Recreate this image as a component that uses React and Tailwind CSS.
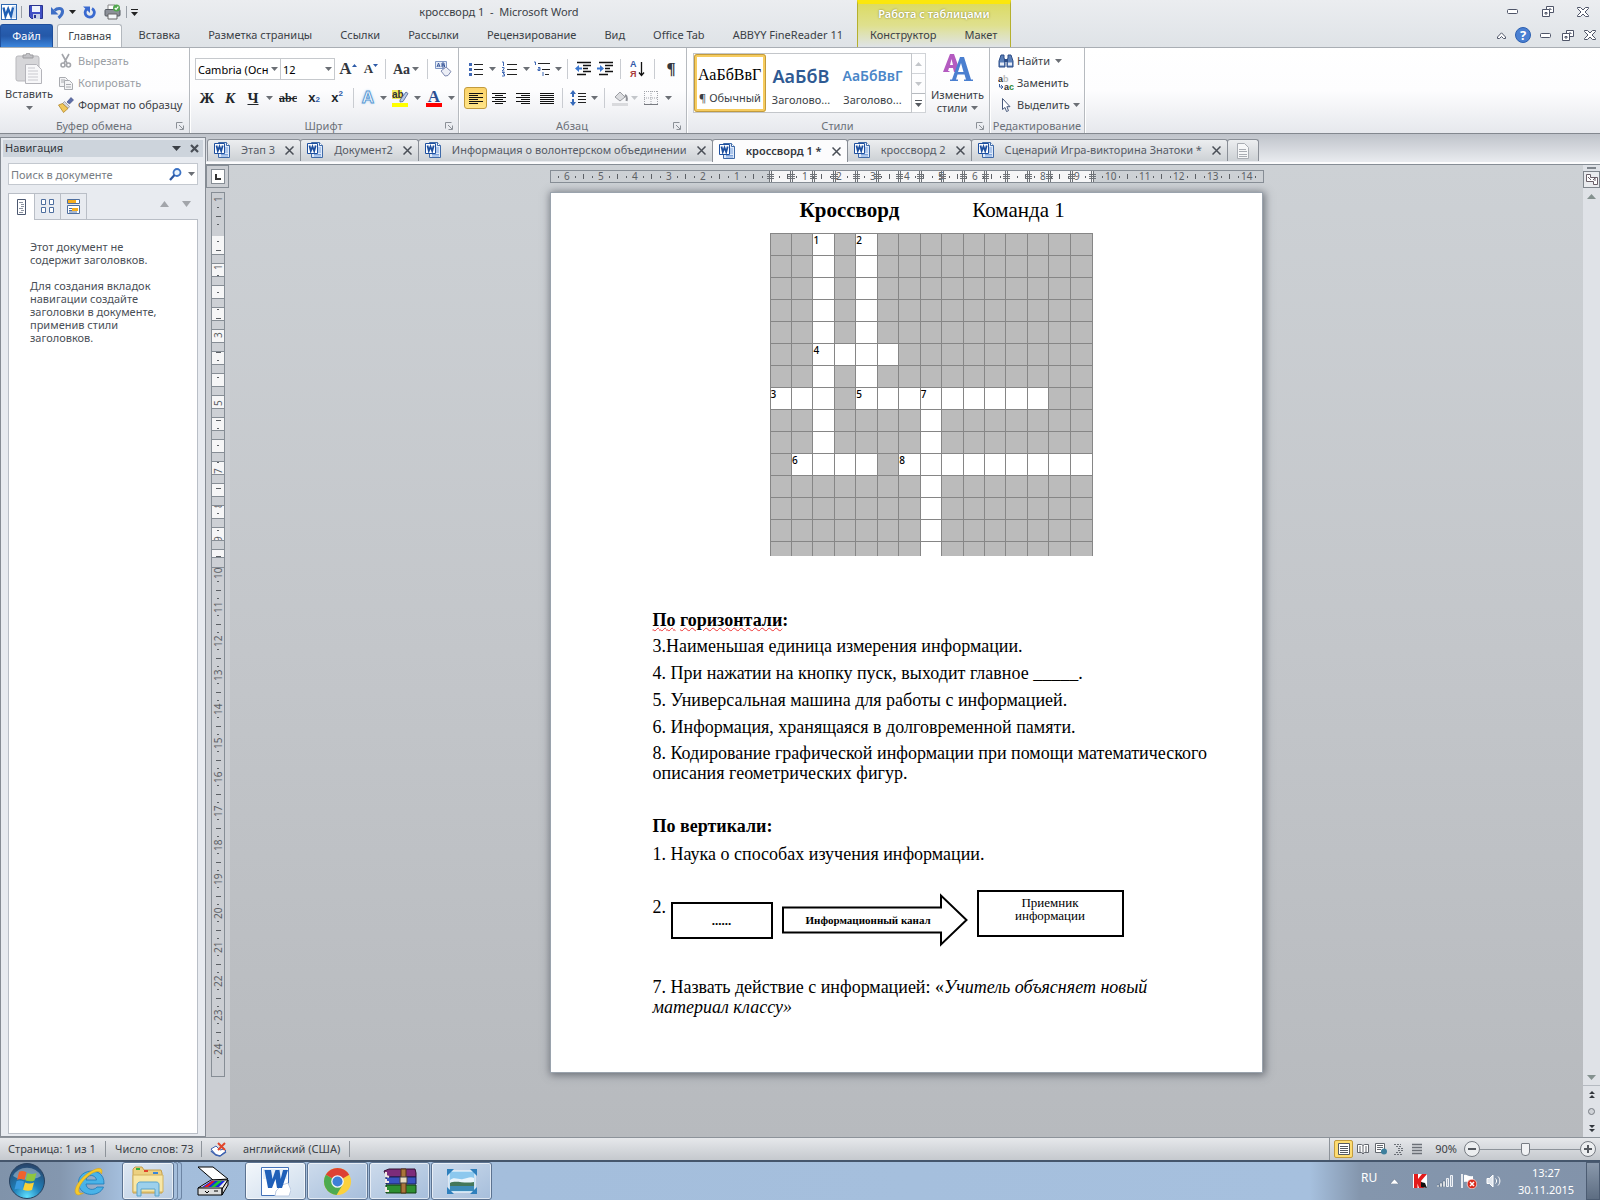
const RIBBON_TABS = [
  "Вставка",
  "Разметка страницы",
  "Ссылки",
  "Рассылки",
  "Рецензирование",
  "Вид",
  "Office Tab",
  "ABBYY FineReader 11"
];

const DOC_TABS = [
  { title: "Этап 3" },
  { title: "Документ2" },
  { title: "Информация о волонтерском объединении" },
  { title: "кроссворд 1 *", active: true },
  { title: "кроссворд 2" },
  { title: "Сценарий Игра-викторина Знатоки *" }
];

// "." is an open cell, "#" a filled one, a digit opens a word
const CROSSWORD = [
  "##1#2##########",
  "##.#.##########",
  "##.#.##########",
  "##.#.##########",
  "##.#.##########",
  "##4...#########",
  "##.#.##########",
  "3..#5..7.....##",
  "##.####.#######",
  "##.####.#######",
  "#6...#8........",
  "#######.#######",
  "#######.#######",
  "#######.#######",
  "#######.#######"
];

const H_RULER = ["6", "5", "4", "3", "2", "1", "", "1", "2", "3", "4", "5", "6", "", "8", "9", "10", "11", "12", "13", "14"];
const V_RULER = ["1", "", "1", "2", "3", "4", "5", "6", "7", "8", "9", "10", "11", "12", "13", "14", "15", "16", "17", "18", "19", "20", "21", "22", "23", "24"];

function Arrow({ className = "text-[#6b6f75]" }) {
  return (
    <svg className={`h-[4px] w-[7px] shrink-0 ${className}`} viewBox="0 0 7 4" aria-hidden>
      <path d="M0 0h7L3.500 4z" fill="currentColor" />
    </svg>
  );
}

function Tool({ label, height = "h-[22px]", className = "", children }) {
  return (
    <button type="button" aria-label={label} title={label} className={`flex shrink-0 items-center justify-center ${height} ${className}`}>
      {children}
    </button>
  );
}

function Drop({ label, className = "text-[#6b6f75]" }) {
  return (
    <button type="button" aria-label={label} className="flex h-[20px] w-2 shrink-0 items-center justify-center">
      <Arrow className={className} />
    </button>
  );
}

function Sep({ className = "w-2" }) {
  return (
    <div className={`flex h-5 shrink-0 justify-center ${className}`}>
      <div className="h-full w-px bg-[#c9ccd1]" />
    </div>
  );
}

function Group({ title, launcher, className, children }) {
  return (
    <section className={`flex shrink-0 flex-col border-r border-[#b6babf] shadow-[1px_0_0_#fff] ${className}`}>
      <div className="flex-1">{children}</div>
      <div className="flex h-[15px] items-center leading-[15px] text-[#6a7078]">
        <h2 className="flex-1 text-center">{title}</h2>
        {launcher && (
          <button type="button" aria-label={`${title}: параметры`} className="mr-[5px] -ml-3 h-2 w-2">
            <svg viewBox="0 0 8 8" className="h-2 w-2" fill="none" stroke="#8b9097">
              <path d="M.5 6.500v-6h6M3 3l4 4M7.500 3.500v4h-4" />
            </svg>
          </button>
        )}
      </div>
    </section>
  );
}

function Lines({ d, color = "#111" }) {
  return (
    <svg className="h-4 w-4" viewBox="0 0 16 16" fill="none" stroke={color} aria-hidden>
      <path d={d} />
    </svg>
  );
}

function WordDocIcon() {
  return (
    <svg className="h-[17px] w-[17px] shrink-0" viewBox="0 0 17 17" aria-hidden>
      <path d="M4.500.5h8l3 3v12h-11z" fill="#dfeafa" stroke="#3f6aa8" />
      <path d="M12.500.5v3h3" fill="#fff" stroke="#3f6aa8" />
      <path d="M11 6h3M11 8h3M7 12.500h7M7 14h7M11 10h3" stroke="#7ba2dc" />
      <path d="M.5 1.500h10v10H.5z" fill="#fff" stroke="#1d4f9f" />
      <path d="M2.500 3.500l1.300 5.500L5.500 4.500 7.200 9l1.500-5.500" fill="none" stroke="#1d4f9f" strokeWidth="1.800" />
    </svg>
  );
}

function WindowButtons({ className }) {
  return (
    <div className={`flex items-center ${className}`}>
      <button type="button" aria-label="Свернуть" className="flex w-[13px] justify-center">
        <svg className="h-[5px] w-[11px]" viewBox="0 0 11 5">
          <rect x=".5" y=".5" width="10" height="4" rx="1" fill="#fff" stroke="#4f5568" />
        </svg>
      </button>
      <button type="button" aria-label="Восстановить" className="flex w-[13px] justify-center">
        <svg className="h-[11px] w-[12px]" viewBox="0 0 12 11" fill="#fff" stroke="#4f5568">
          <path d="M4.500.5h7v6h-7zM7 3h2v1" />
          <path d="M.5 3.500h7v7h-7z" />
          <path d="M3 6.500h2v1.500H3z" />
        </svg>
      </button>
      <button type="button" aria-label="Закрыть" className="flex w-[13px] justify-center">
        <svg className="h-[10px] w-[12px]" viewBox="0 0 12 10">
          <path d="M.5.5h3L6 3 8.500.5h3v1L8 5l3.500 3.500v1h-3L6 7 3.500 9.500h-3v-1L4 5 .5 1.500z" fill="#fff" stroke="#4f5568" />
        </svg>
      </button>
    </div>
  );
}

function QuickAccess() {
  return (
    <div className="flex h-6 w-[141px] shrink-0 items-center">
      <svg className="ml-px h-4 w-4 shrink-0" viewBox="0 0 16 16" aria-hidden>
        <rect x=".5" y=".5" width="15" height="15" fill="#fff" stroke="#2d67b2" />
        <path d="M11 2h4v12h-4z" fill="#cfe0f5" />
        <path d="M2.500 3.500l2 8.500L7.200 5 10 12l2-8.500" fill="none" stroke="#1f5fb4" strokeWidth="2.300" />
      </svg>
      <div className="mx-1 h-3 w-px shrink-0 bg-[#9aa0a8]" />
      <Tool label="Сохранить" className="ml-[2px] w-[15px]">
        <svg className="h-[14px] w-[14px]" viewBox="0 0 14 14">
          <path d="M.5.5h13v13h-11l-2-2z" fill="#3f4fc4" stroke="#2a348f" />
          <path d="M3 1h8v6H3z" fill="#eef3fb" />
          <path d="M4 9h7v5H4z" fill="#c9d2e6" />
          <path d="M5 10h2v3H5z" fill="#2a348f" />
        </svg>
      </Tool>
      <Tool label="Отменить" className="ml-[7px] w-[15px]">
        <svg className="h-[13px] w-[14px]" viewBox="0 0 14 13">
          <path d="M3.500 4.500C6 2 11 1.500 11.500 5c.3 2.500-1.500 5-4 7" fill="none" stroke="#3f6fc6" strokeWidth="3" />
          <path d="M0 1v7.500h7.500z" fill="#3f6fc6" />
        </svg>
      </Tool>
      <Tool label="Список отмены" className="w-[14px]">
        <Arrow className="text-[#222]" />
      </Tool>
      <Tool label="Повторить" className="ml-px w-[18px]">
        <svg className="h-[13px] w-[13px]" viewBox="0 0 13 13">
          <path d="M9 2.500a4.600 4.600 0 1 1-5 .3" fill="none" stroke="#3a6ad0" strokeWidth="2.800" />
          <path d="M0 .5h7v6.500z" fill="#3a6ad0" />
        </svg>
      </Tool>
      <Tool label="Быстрая печать" className="ml-[3px] w-[22px]">
        <svg className="h-4 w-[17px]" viewBox="0 0 17 16">
          <path d="M4 1h7v6H4z" fill="#fff" stroke="#888" />
          <rect x="1" y="5.500" width="15" height="6.500" rx="1" fill="#8c9098" stroke="#555a61" />
          <path d="M4 10h9v5H4z" fill="#f4f6f8" stroke="#666" />
          <circle cx="12.500" cy="4" r="3.500" fill="#52a74e" />
          <path d="M10.800 4l1.300 1.400 2.200-2.700" fill="none" stroke="#fff" strokeWidth="1.200" />
        </svg>
      </Tool>
      <div className="mx-[3px] h-3 w-px shrink-0 bg-[#9aa0a8]" />
      <Tool label="Настройка панели быстрого доступа" className="w-2">
        <svg className="h-[7px] w-[7px]" viewBox="0 0 7 7">
          <path d="M0 .5h7" stroke="#222" />
          <path d="M0 3h7L3.500 7z" fill="#222" />
        </svg>
      </Tool>
    </div>
  );
}

function Header() {
  return (
    <header className="flex h-12 shrink-0 border-b border-[#a9aeb4] bg-linear-to-b from-[#ebedf0] to-[#dfe3e7] text-[#3b3f46]">
      <div className="flex w-[857px] shrink-0 flex-col">
        <div className="flex h-6">
          <QuickAccess />
          <h1 className="flex-1 self-center text-center whitespace-pre">кроссворд 1  -  Microsoft Word</h1>
        </div>
        <nav className="flex h-[24px] items-stretch">
          <button type="button" className="w-[56px] rounded-t-[3px] border border-b-0 border-[#1f4f9c] bg-linear-to-b from-[#2b62b4] via-[#2458a8] to-[#3c86dd] text-white">
            Файл
          </button>
          <button type="button" className="ml-1 w-[69px] rounded-t-[3px] border border-b-0 border-[#b3b8be] bg-white">
            Главная
          </button>
          <div className="flex pl-[2px]">
            {RIBBON_TABS.map((tab) => (
              <button key={tab} type="button" className="px-[14px] whitespace-nowrap">
                {tab}
              </button>
            ))}
          </div>
        </nav>
      </div>
      <div className="flex w-[154px] shrink-0 flex-col border-x border-[#b5b02e] border-t-[4px] border-t-[#fbe70c] bg-linear-to-b from-[#dcdb62] via-[#dfe08e] via-50% to-[#dfe3e7]">
        <div className="h-5 text-center leading-[19px] font-semibold text-white [text-shadow:0_0_2px_#77762f]">Работа с таблицами</div>
        <div className="flex h-6">
          <button type="button" className="px-3">Конструктор</button>
          <button type="button" className="px-4">Макет</button>
        </div>
      </div>
      <div className="flex flex-1 flex-col items-end">
        <WindowButtons className="h-6 gap-[22px] pr-[11px]" />
        <div className="flex h-6 items-center">
          <button type="button" aria-label="Свернуть ленту" className="mr-[9px]">
            <svg className="h-[7px] w-[9px]" viewBox="0 0 9 7">
              <path d="M.5 5L4.500.8 8.500 5v1.500h-2l-2-2-2 2h-2z" fill="#fff" stroke="#4f5568" />
            </svg>
          </button>
          <button type="button" aria-label="Справка" className="mr-[8px] h-4 w-4 rounded-full border border-[#2c5fb0] bg-[#4a80d2] text-[13px] leading-[13px] font-bold text-white">
            ?
          </button>
          <WindowButtons className="gap-[9px] pr-[4px]" />
        </div>
      </div>
    </header>
  );
}

function ClipboardGroup() {
  return (
    <Group title="Буфер обмена" launcher className="w-[190px]">
      <div className="flex pt-[2px]">
        <button type="button" className="flex w-[58px] flex-col items-center text-[#3b3f46]">
          <svg className="mt-[3px] h-[31px] w-[28px]" viewBox="0 0 28 31">
            <rect x="1" y="3" width="23" height="25" rx="2" fill="#d6d6d9" stroke="#b9b9bd" />
            <path d="M8 5V2h3a2 2 0 0 1 4 0h3v3z" fill="#c2c2c6" stroke="#9c9ca0" />
            <path d="M10.500 11.500h11l5 5v14h-16z" fill="#f7f7f9" stroke="#b4b4ba" />
            <path d="M13 15h7M13 18h10M13 21h10M13 24h10M13 27h10" stroke="#c9c9cf" />
          </svg>
          <span className="leading-[20px]">Вставить</span>
          <span className="mt-[2px]"><Arrow /></span>
        </button>
        <div className="flex flex-col text-[#9b9fa5]">
          <button type="button" className="flex h-[22px] items-center gap-1">
            <svg className="h-4 w-4" viewBox="0 0 16 16" fill="none" stroke="#a3a5aa" strokeWidth="1.600">
              <path d="M4 1l5 9M11 1L6 10" />
              <circle cx="5" cy="12" r="2" />
              <circle cx="10.500" cy="12" r="2" />
            </svg>
            Вырезать
          </button>
          <button type="button" className="flex h-[22px] items-center gap-1">
            <svg className="h-4 w-4" viewBox="0 0 16 16" fill="#f3f3f5" stroke="#a9abb0">
              <path d="M1.500 2.500h6l2 2v7h-8zM3 5h4M3 7h4" />
              <path d="M6.500 5.500h5l3 3v6h-8zM8 9.500h5M8 12h5" />
            </svg>
            Копировать
          </button>
          <button type="button" className="flex h-[22px] items-center gap-1 text-[#3b3f46]">
            <svg className="h-4 w-4" viewBox="0 0 16 16">
              <path d="M9 5l4-4.500L15.500 3 11.500 7z" fill="#5d6ea8" stroke="#39457a" strokeWidth=".6" />
              <path d="M6.500 4.500l5 5-1.500 2-5.500-5z" fill="#d9d9de" stroke="#77777f" strokeWidth=".6" />
              <path d="M4.500 6.500l5.500 5-4.500 4L.5 8z" fill="#f1c75b" stroke="#a87c1e" strokeWidth=".7" />
            </svg>
            Формат по образцу
          </button>
        </div>
      </div>
    </Group>
  );
}

function FontGroup() {
  return (
    <Group title="Шрифт" launcher className="w-[269px]">
      <div className="flex h-[42px] items-center pl-[5px] font-['Liberation_Serif',serif] text-[#33373d]">
        <div className="flex h-[22px] w-[86px] items-center border border-[#c6c9cd] bg-white font-['Noto_Sans',sans-serif] text-black">
          <input aria-label="Шрифт" defaultValue="Cambria (Осн" className="h-full w-[74px] pl-[2px] text-[11px] outline-none" />
          <Drop label="Выбрать шрифт" />
        </div>
        <div className="flex h-[22px] w-[54px] items-center border border-l-0 border-[#c6c9cd] bg-white font-['Noto_Sans',sans-serif] text-black">
          <input aria-label="Размер шрифта" defaultValue="12" className="h-full w-[43px] pl-[2px] text-[11px] outline-none" />
          <Drop label="Выбрать размер" />
        </div>
        <Tool label="Увеличить размер" className="w-[26px] text-[17px] font-bold">
          A
          <svg className="mb-2 h-[3px] w-[5px]" viewBox="0 0 5 3"><path d="M0 3h5L2.500 0z" fill="#2c5aa8" /></svg>
        </Tool>
        <Tool label="Уменьшить размер" className="w-5 text-[13px] font-bold">
          A
          <svg className="mb-2 h-[3px] w-[5px]" viewBox="0 0 5 3"><path d="M0 0h5L2.500 3z" fill="#2c5aa8" /></svg>
        </Tool>
        <Sep />
        <Tool label="Регистр" className="w-[34px] gap-[2px] text-[14px] font-bold">
          Aa
          <Arrow />
        </Tool>
        <Sep />
        <Tool label="Очистить формат" className="w-[24px]">
          <svg className="h-4 w-[17px]" viewBox="0 0 17 16">
            <path d="M.5.5h11v7H.5z" fill="#e6edf8" stroke="#8097c4" />
            <path d="M2 6l1.500-4L5 6M2.500 5h2M7 6V2h2v2H7h2.500v2z" fill="none" stroke="#3d5a9b" />
            <path d="M6 10l5-4 5 4.500-3 4-3 .5z" fill="#eceef6" stroke="#7f8ab0" />
          </svg>
        </Tool>
      </div>
      <div className="flex h-4 items-center pl-[5px] font-['Liberation_Serif',serif] text-[#22262b]">
        <Tool label="Полужирный" className="w-6 text-[15px] font-bold">Ж</Tool>
        <Tool label="Курсив" className="w-[22px] text-[15px] font-bold italic">К</Tool>
        <Tool label="Подчеркнутый" className="w-6 text-[15px] font-bold underline">Ч</Tool>
        <Drop label="Стиль подчеркивания" />
        <Tool label="Зачеркнутый" className="w-[30px] text-[12px] font-bold line-through">abc</Tool>
        <Tool label="Подстрочный знак" className="w-[22px] font-['Liberation_Sans',sans-serif] text-[13px] font-bold">
          x<sub className="text-[8px] text-[#2c5aa8]">2</sub>
        </Tool>
        <Tool label="Надстрочный знак" className="w-6 font-['Liberation_Sans',sans-serif] text-[13px] font-bold">
          x<sup className="text-[8px] text-[#2c5aa8]">2</sup>
        </Tool>
        <Sep />
        <Tool label="Текстовые эффекты" className="w-[22px] font-['Liberation_Sans',sans-serif] text-[17px] font-bold text-white [-webkit-text-stroke:1px_#5b9bd5] [text-shadow:0_0_3px_#7db6ea]">A</Tool>
        <Drop label="Выбрать эффект" />
        <Tool label="Цвет выделения" className="w-[26px]">
          <svg className="h-[17px] w-[17px]" viewBox="0 0 17 17">
            <path d="M0 0h10v9H0z" fill="#f2ec5b" />
            <text x="0" y="8" fontSize="10" fontWeight="700" fill="#333" fontFamily="Liberation Sans, sans-serif">ab</text>
            <path d="M8 10l6-8 2 1.500-5 8-3 .5z" fill="#b7c9e8" stroke="#4a5f91" strokeWidth=".8" />
            <path d="M0 13h16v4H0z" fill="#ff0" />
          </svg>
        </Tool>
        <Drop label="Выбрать цвет выделения" />
        <Tool label="Цвет текста" className="w-[26px] flex-col">
          <span className="h-[13px] text-[17px] leading-[13px] font-bold text-[#2b4f92]">A</span>
          <span className="h-1 w-4 bg-[#f00]" />
        </Tool>
        <Drop label="Выбрать цвет текста" />
      </div>
    </Group>
  );
}

function ParagraphGroup() {
  return (
    <Group title="Абзац" launcher className="w-[228px]">
      <div className="flex h-[42px] items-center pl-[5px]">
        <Tool label="Маркеры" className="w-6">
          <svg className="h-4 w-4" viewBox="0 0 16 16">
            <path d="M6 3.500h9M6 8.500h9M6 13.500h9" stroke="#222" />
            <path d="M1 2h3v3H1zM1 7h3v3H1zM1 12h3v3H1z" fill="#3f68b5" />
          </svg>
        </Tool>
        <Drop label="Вид маркера" />
        <Tool label="Нумерация" className="w-[26px]">
          <svg className="h-4 w-4" viewBox="0 0 16 16">
            <path d="M6 3.500h10M6 8.500h10M6 13.500h10" stroke="#222" />
            <path d="M1 1h1.500v4M1 6.500h2v1.500l-2 2h2.500M1 11.500h2.500L2 13h1.500v2H1" fill="none" stroke="#3f68b5" />
          </svg>
        </Tool>
        <Drop label="Вид номера" />
        <Tool label="Многоуровневый список" className="w-6">
          <svg className="h-4 w-4" viewBox="0 0 16 16">
            <path d="M4 2.500h12M8 8.500h8M11 13.500h4" stroke="#222" />
            <path d="M0 1h1.500v3M4 6.500h2v3H4v-1.500h2M9 11v4" fill="none" stroke="#3f68b5" />
          </svg>
        </Tool>
        <Drop label="Вид списка" />
        <Sep className="w-[10px]" />
        <Tool label="Уменьшить отступ" className="w-[22px]">
          <svg className="h-4 w-4" viewBox="0 0 16 16">
            <path d="M2 1.500h14M8 4.500h8M8 7.500h5M8 10.500h8M2 13.500h9" stroke="#111" strokeWidth="1.500" />
            <path d="M0 7.500l4-3.500v2.500h3v2H4V11z" fill="#3c78d0" />
          </svg>
        </Tool>
        <Tool label="Увеличить отступ" className="w-[22px]">
          <svg className="h-4 w-4" viewBox="0 0 16 16">
            <path d="M2 1.500h14M8 4.500h8M8 7.500h5M8 10.500h8M2 13.500h9" stroke="#111" strokeWidth="1.500" />
            <path d="M7 7.500L3 4v2.500H0v2h3V11z" fill="#3c78d0" />
          </svg>
        </Tool>
        <Sep />
        <Tool label="Сортировка" className="w-[26px]">
          <svg className="h-[22px] w-4" viewBox="0 0 16 22" fontFamily="Liberation Sans, sans-serif" fontSize="9" fontWeight="700">
            <text x="1" y="9" fill="#3258a8">А</text>
            <text x="1" y="19" fill="#a83a3a">Я</text>
            <path d="M12.500 4v13M10 14.500l2.500 3 2.500-3" fill="none" stroke="#111" strokeWidth="1.300" />
          </svg>
        </Tool>
        <Sep />
        <Tool label="Отобразить все знаки" className="w-[26px] font-['Liberation_Serif',serif] text-[17px] font-bold text-[#33373d]">¶</Tool>
      </div>
      <div className="flex h-4 items-center pl-[5px]">
        <Tool label="По левому краю" className="w-[23px] rounded-[3px] border border-[#c29b3d] bg-linear-to-b from-[#fbd36a] to-[#ffe588]">
          <Lines d="M1 3.500h14M1 5.500h9M1 7.500h14M1 9.500h9M1 11.500h14M1 13.500h9" />
        </Tool>
        <Tool label="По центру" className="w-6"><Lines d="M1 3.500h14M4 5.500h8M1 7.500h14M4 9.500h8M1 11.500h14M4 13.500h8" /></Tool>
        <Tool label="По правому краю" className="w-6"><Lines d="M1 3.500h14M6 5.500h9M1 7.500h14M6 9.500h9M1 11.500h14M6 13.500h9" /></Tool>
        <Tool label="По ширине" className="w-[23px]"><Lines d="M1 3.500h14M1 5.500h14M1 7.500h14M1 9.500h14M1 11.500h14M1 13.500h14" /></Tool>
        <Sep />
        <Tool label="Интервал" className="w-6">
          <svg className="h-4 w-4" viewBox="0 0 16 16">
            <path d="M8 3.500h8M8 6.500h8M8 9.500h8M8 12.500h8" stroke="#222" />
            <path d="M3 0l3 4H4v3H2V4H0zM3 16l3-4H4V9H2v3H0z" fill="#3569b9" />
          </svg>
        </Tool>
        <Drop label="Выбрать интервал" />
        <Sep className="w-3" />
        <Tool label="Заливка" className="w-5">
          <svg className="h-4 w-4" viewBox="0 0 16 16">
            <path d="M3 7l5-5 5 5-5 4z" fill="#dcdde0" stroke="#9b9da2" />
            <path d="M13 5c2 1 2 4 1.500 6" fill="none" stroke="#8d8f95" strokeWidth="2" />
            <path d="M0 13h16v3H0z" fill="#d9dadd" />
          </svg>
        </Tool>
        <Drop label="Цвет заливки" className="text-[#c3c6ca]" />
        <Tool label="Границы" className="w-[26px]">
          <svg className="h-[14px] w-[14px]" viewBox="0 0 14 14">
            <path d="M.5 0v13M7 0v13M13.500 0v13M0 .5h14M0 7h14" stroke="#a2a5ab" strokeDasharray="1 1" />
            <path d="M0 13.500h14" stroke="#777a80" />
          </svg>
        </Tool>
        <Drop label="Вид границ" />
      </div>
    </Group>
  );
}

function StylesGroup() {
  return (
    <Group title="Стили" launcher className="w-[303px]">
      <div className="flex pt-[5px] pl-[6px]">
        <div className="flex h-[60px] w-[219px] border border-[#c3c6ca] bg-white">
          <button type="button" className="w-[72px] overflow-hidden rounded-[3px] border-[3px] border-[#f6cc5f] text-center whitespace-nowrap outline-1 -outline-offset-1 outline-[#c29b3d]">
            <span className="block h-[30px] overflow-hidden pt-[3px] pl-px text-left font-['Liberation_Serif',serif] text-[16px] leading-[26px] text-black">АаБбВвГ</span>
            <span className="block leading-[18px]">¶ Обычный</span>
          </button>
          <button type="button" className="w-[70px] overflow-hidden pt-[3px] text-center whitespace-nowrap">
            <span className="block h-[30px] pt-[2px] text-[18px] leading-[26px] font-semibold text-[#2f5a93]">АаБбВ</span>
            <span className="block leading-[18px]">Заголово...</span>
          </button>
          <button type="button" className="w-[73px] overflow-hidden pt-[3px] text-center whitespace-nowrap">
            <span className="block h-[30px] pt-[2px] text-[14px] leading-[26px] font-semibold text-[#4a86c8]">АаБбВвГ</span>
            <span className="block leading-[18px]">Заголово...</span>
          </button>
        </div>
        <div className="flex h-[60px] w-[14px] flex-col border border-l-0 border-[#d0d3d7]">
          <Tool label="Стили вверх" height="h-[19px]" className="w-full"><Arrow className="rotate-180 text-[#c3c6ca]" /></Tool>
          <Tool label="Стили вниз" height="h-5" className="w-full border-t border-[#d0d3d7]"><Arrow className="text-[#c3c6ca]" /></Tool>
          <Tool label="Все стили" height="h-[19px]" className="w-full flex-col gap-[2px] border-t border-[#b6babf] bg-white">
            <span className="h-px w-[7px] bg-[#55595f]" />
            <Arrow className="text-[#55595f]" />
          </Tool>
        </div>
        <button type="button" className="flex flex-1 flex-col items-center leading-[13px]">
          <svg className="h-[30px] w-[30px]" viewBox="0 0 30 30">
            <path fillRule="evenodd" d="M0 19L7 1h4l5 14-2 4h-3l-1-4H6l-1 3h1.500v1zm7-7h3L8.500 6z" fill="#b45bc0" />
            <path fillRule="evenodd" d="M7 28v-1.500h2L17 4h4l7 22.500h2V28h-9v-1.500h2l-1.500-5h-7l-1.500 5h2V28zm8-9h5.500L18 10z" fill="#4a7fd0" />
          </svg>
          <span className="mt-[5px]">Изменить</span>
          <span className="flex items-center gap-1">стили <Arrow /></span>
        </button>
      </div>
    </Group>
  );
}

function EditingGroup() {
  return (
    <Group title="Редактирование" className="w-[95px]">
      <div className="flex flex-col pt-[2px] pl-[8px]">
        <button type="button" className="flex h-[22px] items-center gap-[3px]">
          <svg className="h-4 w-4" viewBox="0 0 16 16">
            <path d="M3 2h3v3l1 2v7H1V8zM10 2h3l2 6v6H9V7l1-2z" fill="#5a7fb8" stroke="#2d4d86" />
            <path d="M6 6h4v3H6z" fill="#2d4d86" />
            <path d="M2 9.500h4v3H2zM10 9.500h4v3h-4z" fill="#e8eef8" />
          </svg>
          Найти
          <span className="ml-[2px]"><Arrow /></span>
        </button>
        <button type="button" className="flex h-[22px] items-center gap-[3px]">
          <svg className="h-4 w-4" viewBox="0 0 16 16" fontFamily="Liberation Sans, sans-serif" fontSize="9" fontWeight="700">
            <text x="0" y="7" fill="#333">a</text>
            <text x="5" y="7" fill="#bbb">b</text>
            <text x="6" y="15" fill="#333">a</text>
            <text x="11" y="15" fill="#2c8a35">c</text>
            <path d="M1.500 9v3h3M3 10l2 2-2 2" fill="none" stroke="#3c5f9e" />
          </svg>
          Заменить
        </button>
        <button type="button" className="flex h-[22px] items-center gap-[3px]">
          <svg className="h-4 w-4" viewBox="0 0 16 16">
            <path d="M4.500 1.500v11l2.500-2 1.500 4 2-.8-1.600-4h3.100z" fill="#fff" stroke="#48597c" />
          </svg>
          Выделить
          <Arrow />
        </button>
      </div>
    </Group>
  );
}

function Ribbon() {
  return (
    <div className="flex h-[86px] shrink-0 border-b border-[#83888f] bg-linear-to-b from-white via-[#fdfdfe] to-[#e6e8ed] text-[#3b3f46]">
      <ClipboardGroup />
      <FontGroup />
      <ParagraphGroup />
      <StylesGroup />
      <EditingGroup />
    </div>
  );
}

function NavigationPane() {
  return (
    <aside className="mt-[3px] flex w-[206px] shrink-0 flex-col border border-[#868c94] bg-[#e8ebf0] px-[2px] pt-[2px] pb-[2px] text-[#4a4f57]">
      <div className="flex h-[17px] items-center bg-[#cdd4dc] pr-[4px] pl-[2px] text-[#33373d]">
        <h2 className="flex-1">Навигация</h2>
        <Tool label="Параметры панели" height="h-4" className="mr-[9px] w-[9px]">
          <svg className="h-[5px] w-[9px]" viewBox="0 0 9 5"><path d="M0 0h9L4.500 5z" fill="#3b3f46" /></svg>
        </Tool>
        <Tool label="Закрыть панель" height="h-4" className="w-[9px]">
          <svg className="h-[9px] w-[9px]" viewBox="0 0 9 9"><path d="M1 1l7 7M8 1L1 8" stroke="#4a4f57" strokeWidth="2.200" /></svg>
        </Tool>
      </div>
      <div className="mx-[5px] mt-[6px] flex h-[22px] items-center border border-[#c3c8cf] bg-white">
        <input aria-label="Поиск в документе" placeholder="Поиск в документе" className="h-full w-0 flex-1 pl-[2px] outline-none placeholder:text-[#777c83]" />
        <Tool label="Найти" height="h-5" className="w-[14px]">
          <svg className="h-[13px] w-[13px]" viewBox="0 0 13 13" fill="none">
            <circle cx="8" cy="4.500" r="3.500" fill="#e9f3fc" stroke="#3c72c4" strokeWidth="1.800" />
            <path d="M5.500 7L1 12" stroke="#2a55a0" strokeWidth="2.200" />
          </svg>
        </Tool>
        <Tool label="Параметры поиска" height="h-5" className="ml-[3px] w-3"><Arrow /></Tool>
      </div>
      <div className="mx-[5px] mt-[8px] flex h-[26px]">
        <button type="button" aria-label="Заголовки" className="z-10 -mb-px flex w-[27px] items-center justify-center border border-b-0 border-[#b9bec6] bg-white">
          <svg className="h-4 w-[9px]" viewBox="0 0 9 16"><path d="M.5.5h8v15h-8z" fill="#fff" stroke="#4c5870" /><path d="M2 3.500h4M4 5.500h3M4 7.500h3M2 9.500h4M4 11.500h3M2 13.500h4" stroke="#8c93a1" /></svg>
        </button>
        <button type="button" aria-label="Страницы" className="flex w-[26px] items-center justify-center border border-b-0 border-l-0 border-[#b9bec6]">
          <svg className="h-[15px] w-[13px]" viewBox="0 0 13 15" fill="#fff" stroke="#4f6f9f"><path d="M.5.5h4v5h-4zM8.500.5h4v5h-4zM.5 8.500h4v5h-4zM8.500 8.500h4v5h-4z" /></svg>
        </button>
        <button type="button" aria-label="Результаты" className="flex w-[26px] items-center justify-center border border-b-0 border-l-0 border-[#b9bec6]">
          <svg className="h-[15px] w-[13px]" viewBox="0 0 13 15" fill="#fff" stroke="#4f6f9f"><path d="M.5.5h12v4H.5zM.5 6.500h12v8H.5z" /><path d="M1 2.500h8M5 10.500h6" stroke="#f5ad1f" strokeWidth="3" /><path d="M2 9.500h3M2 11.500h3M2 13h8" /></svg>
        </button>
        <div className="flex flex-1 items-center justify-end gap-[13px] pr-[7px] pb-[5px] text-[#a2a5aa]">
          <button type="button" aria-label="Предыдущий"><svg className="h-[6px] w-[9px]" viewBox="0 0 9 6"><path d="M0 6h9L4.500 0z" fill="currentColor" /></svg></button>
          <button type="button" aria-label="Следующий"><svg className="h-[6px] w-[9px]" viewBox="0 0 9 6"><path d="M0 0h9L4.500 6z" fill="currentColor" /></svg></button>
        </div>
      </div>
      <div className="mx-[5px] flex-1 border border-[#b9bec6] bg-white pt-[20px] pl-[21px] leading-[13px]">
        <p>Этот документ не<br />содержит заголовков.</p>
        <p className="mt-[13px]">Для создания вкладок<br />навигации создайте<br />заголовки в документе,<br />применив стили<br />заголовков.</p>
      </div>
    </aside>
  );
}

function DocumentTabs() {
  return (
    <div className="flex h-[28px] shrink-0 items-end pl-px text-[#565b66]">
      {DOC_TABS.map((tab) => (
        <div
          key={tab.title}
          className={`-ml-px flex shrink-0 items-center rounded-t-[3px] border border-b-0 border-[#8a8f97] px-[6px] first:ml-0 ${tab.active ? "h-[23px] bg-[#fcfcfd] font-semibold text-[#33363c]" : "mb-px h-[22px] bg-linear-to-b from-[#eceef0] to-[#cdd1d5]"}`}
        >
          <WordDocIcon />
          <button type="button" className="ml-[10px] whitespace-nowrap">{tab.title}</button>
          <button type="button" aria-label={`Закрыть ${tab.title}`} className="ml-[10px]">
            <svg className="h-[9px] w-[9px]" viewBox="0 0 9 9"><path d="M.5.5l8 8M8.500.5l-8 8" stroke="#4a4f57" strokeWidth="1.500" /></svg>
          </button>
        </div>
      ))}
      <button type="button" aria-label="Создать документ" className="mb-px -ml-px flex h-[22px] w-[32px] items-center justify-center rounded-t-[3px] border border-b-0 border-[#8a8f97] bg-linear-to-b from-[#eceef0] to-[#cdd1d5]">
        <svg className="h-4 w-3" viewBox="0 0 12 16" fill="#f6f7f8" stroke="#a9adb3"><path d="M.5.5h7l4 4v11H.5z" /><path d="M2 6.500h7M2 8.500h8M2 11.500h8M2 13.500h8" /></svg>
      </button>
    </div>
  );
}

function HorizontalRuler() {
  return (
    <div className="relative h-[13px] w-[714px] shrink-0 overflow-hidden border border-[#868d95] text-[10px] leading-[11px] text-[#5c6065]">
      <div className="absolute inset-y-0 left-[219px] w-[323px] bg-[#f6f6f7]" />
      <div className="relative -ml-[5px] flex">
        {H_RULER.map((mark, i) => (
          <div key={i} className="grid w-[34px] shrink-0 grid-cols-4 items-center">
            <span className="mx-auto h-[5px] w-px bg-[#5c6065]" />
            <span className="mx-auto h-[2px] w-px bg-[#5c6065]" />
            <span className="flex h-[11px] justify-center">{mark}</span>
            <span className="mx-auto h-[2px] w-px bg-[#5c6065]" />
          </div>
        ))}
      </div>
      <div className="absolute inset-y-0 left-[216px] flex w-[330px] justify-between">
        {Array.from({ length: 16 }, (_, i) => (
          <svg key={i} className="h-[11px] w-[7px]" viewBox="0 0 7 11" stroke="#6f7378" fill="none" aria-hidden>
            <path d="M2.500 0v11M4.500 0v11M0 3.500h7M0 5.500h7M0 7.500h7" />
          </svg>
        ))}
      </div>
    </div>
  );
}

function VerticalRuler() {
  return (
    <div className="relative mt-[4px] ml-[5px] h-[885px] w-[14px] shrink-0 overflow-hidden border border-[#868d95] text-[10px] leading-[12px] text-[#5c6065]">
      <div className="absolute inset-x-0 top-[43px] h-[321px] bg-[#f6f6f7]" />
      <div className="relative -mt-[15px]">
        {V_RULER.map((mark, i) => (
          <div key={i} className="grid h-[34px] grid-rows-4 justify-items-center">
            <span className="my-auto h-px w-[5px] bg-[#5c6065]" />
            <span className="my-auto h-px w-[2px] bg-[#5c6065]" />
            <span className="flex h-2 w-3 rotate-180 items-center justify-center [writing-mode:vertical-rl]">{mark}</span>
            <span className="my-auto h-px w-[2px] bg-[#5c6065]" />
          </div>
        ))}
      </div>
      <div className="absolute inset-x-0 top-[61px] flex flex-col gap-[12px]">
        {Array.from({ length: 14 }, (_, i) => (
          <div key={i} className="h-[10px] border-y border-[#868d95] bg-[#cdd0d5]" />
        ))}
      </div>
      <div className="absolute inset-x-0 top-[364px] h-[11px] border-y border-[#868d95] bg-[#cdd0d5]" />
    </div>
  );
}

function Crossword() {
  return (
    <table className="mt-[9px] ml-[219px] w-[323px] table-fixed border-collapse text-[10px] leading-[13px]">
      <tbody>
        {CROSSWORD.map((row, y) => (
          <tr key={y} className="h-[22px] last:h-[14px]">
            {[...row].map((cell, x) => (
              <td
                key={x}
                className={`border border-[#868686] p-0 align-top font-['Noto_Sans',sans-serif] font-medium ${y === CROSSWORD.length - 1 ? "border-b-0" : ""} ${cell === "#" ? "bg-[#bbb]" : "bg-white"}`}
              >
                {/\d/.test(cell) ? cell : ""}
              </td>
            ))}
          </tr>
        ))}
      </tbody>
    </table>
  );
}

function ChannelDiagram() {
  return (
    <div className="mt-[26px] flex items-start">
      <span className="mt-[7px] w-[18px]">2.</span>
      <div className="mt-[12px] flex h-[37px] w-[102px] items-center justify-center border-2 border-black text-[13px] leading-[13px] font-bold">......</div>
      <div className="relative mt-[3px] ml-[9px] h-[54px] w-[186px] text-[11px] leading-[54px] font-bold">
        <svg className="absolute inset-0 h-full w-full" viewBox="0 0 186 54" fill="#fff" stroke="#000" strokeWidth="2" aria-hidden>
          <path d="M1 14.500h158v-12L184.500 27 159 51.500v-12H1z" />
        </svg>
        <span className="relative ml-[24px]">Информационный канал</span>
      </div>
      <div className="ml-[9px] h-[47px] w-[147px] border-2 border-black pt-[4px] text-center text-[13px] leading-[13px]">
        Приемник
        <br />
        информации
      </div>
    </div>
  );
}

function DocumentPage() {
  return (
    <article className="w-[713px] shrink-0 border border-[#9aa3ad] bg-white pt-[4px] pb-[55px] font-['Liberation_Serif',serif] text-[18px] leading-[20px] text-black shadow-[1px_1px_8px_1px_rgba(70,75,85,0.7)]">
      <div className="flex gap-[73px] pl-[249px] text-[21px] leading-[27px]">
        <strong>Кроссворд</strong>
        <span>Команда 1</span>
      </div>
      <Crossword />
      <div className="pl-[102px]">
        <h3 className="mt-[54px] font-bold">
          <span className="underline decoration-[#e33] decoration-wavy decoration-1">По</span>{" "}
          <span className="underline decoration-[#e33] decoration-wavy decoration-1">горизонтали</span>:
        </h3>
        <p className="mt-[6px]">3.Наименьшая единица измерения информации.</p>
        <p className="mt-[7px]">4. При нажатии на кнопку пуск, выходит главное _____.</p>
        <p className="mt-[7px]">5. Универсальная машина для работы с информацией.</p>
        <p className="mt-[7px]">6. Информация, хранящаяся в долговременной памяти.</p>
        <p className="mt-[6px]">
          8. Кодирование графической информации при помощи математического
          <br />
          описания геометрических фигур.
        </p>
        <h3 className="mt-[33px] font-bold">По вертикали:</h3>
        <p className="mt-[8px]">1. Наука о способах изучения информации.</p>
        <ChannelDiagram />
        <p className="mt-[30px]">
          7. Назвать действие с информацией: «<em>Учитель объясняет новый<br />материал классу»</em>
        </p>
      </div>
    </article>
  );
}

function Scrollbar() {
  return (
    <div className="flex w-[17px] shrink-0 flex-col items-center bg-[#dfe2e7]">
      <div className="mt-[2px] h-[2px] w-[9px] bg-[#7f858c]" />
      <button type="button" aria-label="Линейка" className="mt-[2px] flex h-[17px] w-full items-center justify-center border border-[#7f858c] bg-[#e9ebee]">
        <svg className="h-3 w-3" viewBox="0 0 12 12" fill="#fff" stroke="#6a5f68"><path d="M.5.5h4v3h7v7h-4v-3h-7z" /><path d="M2 3l3 3M7 6l2-2v3" /></svg>
      </button>
      <button type="button" aria-label="Вверх" className="mt-[6px]"><svg className="h-[5px] w-[9px]" viewBox="0 0 9 5"><path d="M0 5h9L4.500 0z" fill="#84918f" /></svg></button>
      <div className="flex-1" />
      <button type="button" aria-label="Вниз" className="mb-[5px]"><svg className="h-[5px] w-[9px]" viewBox="0 0 9 5"><path d="M0 0h9L4.500 5z" fill="#84918f" /></svg></button>
      <div className="flex h-[52px] w-full flex-col items-center justify-around border-t border-[#b5bac1]">
        <button type="button" aria-label="Предыдущая страница"><svg className="h-[7px] w-[6px]" viewBox="0 0 6 7"><path d="M0 3h6L3 0zM0 7h6L3 4z" fill="#33373d" /></svg></button>
        <button type="button" aria-label="Объект перехода" className="h-[7px] w-[7px] rounded-full border border-[#777c83] bg-[#d0d3d8]" />
        <button type="button" aria-label="Следующая страница"><svg className="h-[7px] w-[6px]" viewBox="0 0 6 7"><path d="M0 0h6L3 3zM0 4h6L3 7z" fill="#33373d" /></svg></button>
      </div>
    </div>
  );
}

function StatusBar() {
  return (
    <footer className="flex h-[23px] shrink-0 items-center border-t border-[#8d939a] bg-linear-to-b from-[#e6e8eb] to-[#c5c9ce] text-[#3b3f46]">
      <span className="w-[106px] border-r border-[#8d939a] pl-[8px]">Страница: 1 из 1</span>
      <span className="w-[96px] border-r border-[#8d939a] pl-[9px]">Число слов: 73</span>
      <button type="button" aria-label="Правописание" className="w-[33px] pl-[8px]">
        <svg className="h-4 w-[17px]" viewBox="0 0 17 16">
          <path d="M1 8l5-3 4 4 4-1 2 2-6 5-4-1z" fill="#fff" stroke="#3e62b0" />
          <path d="M1 10l5 4 4 1 6-4" fill="none" stroke="#3e62b0" strokeWidth="1.500" />
          <path d="M8 2l7 7M15 2L8 9" stroke="#e0452b" strokeWidth="2" />
        </svg>
      </button>
      <span className="w-[115px] border-r border-[#8d939a] pl-[8px] whitespace-nowrap">английский (США)</span>
      <div className="flex-1" />
      <div className="flex items-center border-l border-[#8d939a] pl-[4px]">
        <Tool label="Разметка страницы" height="h-[18px]" className="w-[19px] rounded-[2px] border border-[#c29b3d] bg-[#fddc72]">
          <svg className="h-3 w-3" viewBox="0 0 12 12"><path d="M.5.5h11v11H.5z" fill="#fff" stroke="#555a61" /><path d="M2 3.500h8M2 5.500h8M2 7.500h8M2 9.500h8" stroke="#555a61" /></svg>
        </Tool>
        <Tool label="Режим чтения" className="w-[19px]">
          <svg className="h-3 w-3" viewBox="0 0 12 12" fill="#fff" stroke="#62676e"><path d="M.5 1.500h4L6 2.500l1.500-1h4v8h-4L6 11 4.500 9.500h-4zM6 2.500V11M2 4h2M2 6h2M2 8h2M8 4h2M8 6h2M8 8h2" /></svg>
        </Tool>
        <Tool label="Веб-документ" className="w-[17px]">
          <svg className="h-3 w-3" viewBox="0 0 12 12"><path d="M.5.5h9v9h-9z" fill="#fff" stroke="#62676e" /><path d="M2 2.500h6M2 4.500h6M2 6.500h4" stroke="#62676e" /><circle cx="9" cy="8.500" r="3" fill="#3d7f9d" /></svg>
        </Tool>
        <Tool label="Структура" className="w-[19px]"><svg className="h-3 w-3" viewBox="0 0 12 12" stroke="#6b7077"><path d="M1 1.500h7M3 3.500h6M5 5.500h6M5 7.500h6M3 9.500h6M1 11.500h8" strokeDasharray="2 1" /></svg></Tool>
        <Tool label="Черновик" className="w-[18px]"><svg className="h-3 w-3" viewBox="0 0 12 12" stroke="#6b7077"><path d="M1 1.500h10M1 4.500h10M1 7.500h10M1 10.500h10" strokeWidth="1.500" /></svg></Tool>
        <button type="button" className="w-[38px] pl-[2px] text-center">90%</button>
        <button type="button" aria-label="Уменьшить" className="flex h-4 w-4 items-center justify-center rounded-full border border-[#777c83] bg-[#eceef0]">
          <span className="h-[2px] w-2 bg-[#55595f]" />
        </button>
        <input
          type="range"
          aria-label="Масштаб"
          min="0"
          max="100"
          defaultValue="45"
          className="h-px w-[100px] appearance-none bg-[#8d939a] outline-none [&::-webkit-slider-thumb]:h-[13px] [&::-webkit-slider-thumb]:w-[9px] [&::-webkit-slider-thumb]:appearance-none [&::-webkit-slider-thumb]:rounded-t-[1px] [&::-webkit-slider-thumb]:rounded-b-[4px] [&::-webkit-slider-thumb]:border [&::-webkit-slider-thumb]:border-[#777c83] [&::-webkit-slider-thumb]:bg-[#f1f2f4]"
        />
        <button type="button" aria-label="Увеличить" className="mr-[4px] flex h-4 w-4 items-center justify-center rounded-full border border-[#777c83] bg-[#eceef0]">
          <svg className="h-2 w-2" viewBox="0 0 8 8"><path d="M4 0v8M0 4h8" stroke="#55595f" strokeWidth="2" /></svg>
        </button>
      </div>
    </footer>
  );
}

function TaskButton({ label, active, children }) {
  return (
    <button
      type="button"
      aria-label={label}
      className={`ml-px flex h-[38px] w-[61px] items-center justify-center rounded-[3px] border border-[#5c7391] shadow-[inset_0_0_0_1px_rgba(255,255,255,0.6)] ${active ? "bg-linear-to-br from-[#f3f7fb] to-[#cddcec]" : "bg-linear-to-br from-[#cddbec] to-[#a6bedb]"}`}
    >
      {children}
    </button>
  );
}

function Taskbar() {
  return (
    <div className="flex h-[40px] shrink-0 items-center border-t-2 border-[#45566c] bg-[linear-gradient(90deg,#8093aa_0,#8497af_60px,#a3bddb_120px,#a6c0de_calc(100%-290px),#8496ad_calc(100%-240px),#8293aa_100%)]">
      <button type="button" aria-label="Пуск" className="ml-[9px] h-9 w-9">
        <svg className="h-9 w-9" viewBox="0 0 36 36">
          <defs>
            <radialGradient id="orb" cx=".5" cy=".95" r=".9">
              <stop offset="0" stopColor="#5fe0ff" />
              <stop offset=".45" stopColor="#1f7fb8" />
              <stop offset="1" stopColor="#28486f" />
            </radialGradient>
          </defs>
          <circle cx="18" cy="18" r="17.500" fill="url(#orb)" stroke="#27415f" />
          <path d="M4 13a15 13 0 0 1 28 0c-8 5-20 5-28 0z" fill="#fff" opacity=".35" />
          <path d="M10 9c2-1.500 5-1 7.500.3l-2 7.700c-2-1.300-4.500-1.500-7.500-.3z" fill="#f0622c" />
          <path d="M18.500 10c2.500 1.300 6 1.300 9 0l-2 7.500c-2.500 1.200-6 1-9 0z" fill="#8ec63f" />
          <path d="M7.500 18.300c2-1.300 5-.8 7.500.3l-2 8c-2-1.200-5-1.300-7.500-.2z" fill="#3a9be0" />
          <path d="M16 19.500c2.500 1.200 6 1.200 9 0l-2 7.500c-2.500 1.200-6 1-9-.2z" fill="#fbd136" />
        </svg>
      </button>
      <button type="button" aria-label="Internet Explorer" className="ml-[29px] h-8 w-8">
        <svg className="h-8 w-8" viewBox="0 0 32 32">
          <path fillRule="evenodd" d="M30 19H12c.3 6 8 7 11 3h6.500c-4 11-25 10-25-4.500S31 1 30 19zm-7.500-4c-1-6-9.500-6-10.500 0z" fill="#49b3e8" stroke="#1d78b8" strokeWidth=".8" />
          <path d="M27.500 9c2-6-2-7-8-4C8 10-1 23 1.500 28c1 3 5 2 8 0-4 1-6-1-4-6C8.500 14 24 1 27.500 9z" fill="#f6c929" stroke="#d39b12" strokeWidth=".5" />
        </svg>
      </button>
      <button type="button" aria-label="Проводник" className="ml-[16px] flex h-[38px] w-[52px] items-center justify-center rounded-[3px] border border-[#5c7391] bg-linear-to-br from-[#dfe8f2] to-[#b9cce2] shadow-[inset_0_0_0_1px_rgba(255,255,255,0.6)]">
        <svg className="h-8 w-8" viewBox="0 0 32 32">
          <path d="M1 4l2-2h7l2 3h17l1 3v20H1z" fill="#ecd080" stroke="#c49e4a" />
          <path d="M4 3h4v2H4z" fill="#2fae3a" />
          <path d="M12 5h4v2h-4z" fill="#e0452b" />
          <path d="M21 7h5v2h-5z" fill="#3a86d8" />
          <path d="M1 10h30v17H1z" fill="#f8e7a6" stroke="#d2b25e" />
          <path d="M5 31V20c0-2 2-3 3-3h16c2 0 3 1 3 3v11h-4v-7H9v7z" fill="#9cd0ec" stroke="#5aa3cc" />
        </svg>
      </button>
      <div className="h-[38px] w-[4px] rounded-r-[3px] border border-l-0 border-[#6d85a4]" />
      <div className="h-[38px] w-[4px] rounded-r-[3px] border border-l-0 border-[#6d85a4]" />
      <button type="button" aria-label="Сканер" className="mr-[15px] ml-[15px] h-8 w-8">
        <svg className="h-8 w-8" viewBox="0 0 32 32" stroke="#000">
          <path d="M1 2h15l15 12-15 1z" fill="#fff" />
          <path d="M1 23l13-8h17l-6 9z" fill="#eee" />
          <path d="M5 22l9-6h14l-6 6z" fill="#1c2be0" stroke="none" />
          <path d="M7 22l8-6h3l-7 6z" fill="#e81e1e" stroke="none" />
          <path d="M14 22l7-6h4l-7 6z" fill="#19c832" stroke="none" />
          <path d="M1 23h24v7H1zM25 24l6-9v5l-6 10z" fill="#ddd" />
          <path d="M8 26l2 2 2-2M17 26h4" fill="none" />
        </svg>
      </button>
      <TaskButton label="Word" active>
        <svg className="h-[31px] w-[31px]" viewBox="0 0 31 31">
          <path d="M1.500 1.500h27v28h-27z" fill="#fff" stroke="#4472b8" />
          <path d="M3 3h24v10H3z" fill="#e3edf9" />
          <path d="M22 19l6-2 3 7-2 6H15l1-5z" fill="#fff" stroke="#bccbe2" />
          <path d="M4.500 4h6.500l1.500 9 3-9h4l1.200 9L23 4h5l-6 18h-5l-1.500-9-3.500 9H8z" fill="#1f5fb8" />
        </svg>
      </TaskButton>
      <TaskButton label="Chrome">
        <svg className="h-[29px] w-[29px]" viewBox="0 0 30 30">
          <circle cx="15" cy="15" r="14" fill="#fbd13d" />
          <path d="M15 15L2.900 8a14 14 0 0 1 24.200 0z" fill="#dd4133" />
          <path d="M2.900 8A14 14 0 0 0 14 29l6.500-11L15 15z" fill="#4caa50" />
          <circle cx="15" cy="15" r="6.500" fill="#f4f6f8" />
          <circle cx="15" cy="15" r="5.200" fill="#3d7fd6" />
        </svg>
      </TaskButton>
      <TaskButton label="WinRAR">
        <svg className="h-[26px] w-[34px]" viewBox="0 0 34 26">
          <path d="M1 3l5-2h26l1 4v4H4z" fill="#7d2c7a" stroke="#33112f" />
          <path d="M3 9h30v7H3z" fill="#3a52c0" stroke="#161f57" />
          <path d="M3 17h30v8H3z" fill="#2e8f31" stroke="#0e3b10" />
          <path d="M3 4v4l3 1M3 11v3h3M3 19v4h3" fill="none" stroke="#f1e9e2" strokeWidth="2" />
          <path d="M18 1h5v24h-5z" fill="#a9753a" stroke="#553312" />
          <path d="M17 9h7v6h-7z" fill="#e8dcc0" stroke="#444" />
        </svg>
      </TaskButton>
      <TaskButton label="Просмотр изображений">
        <svg className="h-[25px] w-[30px]" viewBox="0 0 30 25">
          <path d="M2 2h26v21H2z" fill="#8cc8ee" stroke="#fff" />
          <path d="M3 11c4-4 9 0 13-1s8-3 11-1v5H3z" fill="#e9f4fb" />
          <path d="M3 14c6-3 14 1 24-1v4H3z" fill="#44775a" />
          <path d="M3 17h24v5H3z" fill="#3d8bb8" />
          <path d="M0 7V0h7l-3 3zM30 7V0h-7l3 3zM0 18v7h7l-3-3zM30 18v7h-7l3-3z" fill="#2f80bd" />
        </svg>
      </TaskButton>
      <div className="flex-1" />
      <div className="flex items-center text-[12px] text-white">
        <span className="mb-[6px] w-[29px]">RU</span>
        <button type="button" aria-label="Скрытые значки" className="w-[23px]"><svg className="h-[5px] w-[9px]" viewBox="0 0 9 5"><path d="M0 5h9L4.500 0z" fill="#fff" stroke="#55657a" strokeWidth=".5" /></svg></button>
        <svg className="mr-[10px] h-[14px] w-[14px]" viewBox="0 0 14 14" aria-hidden>
          <path d="M0 0h14v14H0z" fill="#fff" />
          <path d="M1 0h4v5l4-5h5L8 7l3 7H6L4.500 9.500V14H1z" fill="#e31b1b" />
          <path d="M8 8l4 1 2 5-6-1z" fill="#111" />
        </svg>
        <svg className="mr-[8px] h-3 w-4" viewBox="0 0 16 12" aria-hidden>
          <path d="M0 10h2v2H0zM3 8h2v4H3zM6 6h2v6H6z" fill="#fff" stroke="#3b4b60" strokeWidth=".4" />
          <path d="M9.500 3.500h2v8h-2zM13.500.5h2v11h-2z" fill="#a3b0c0" stroke="#f1f4f8" />
        </svg>
        <svg className="mr-[9px] h-4 w-4" viewBox="0 0 16 16" aria-hidden>
          <path d="M1 1v14" stroke="#fff" strokeWidth="1.600" />
          <path d="M3 2c3-1 4 2 9 1v6c-4 1-6-1-9 0z" fill="#fff" />
          <circle cx="11" cy="11" r="4.800" fill="#d92a1c" stroke="#fff" strokeWidth=".6" />
          <path d="M9 9l4 4M13 9l-4 4" stroke="#fff" strokeWidth="1.500" />
        </svg>
        <svg className="h-4 w-4" viewBox="0 0 16 16" fill="none" stroke="#fff" aria-hidden>
          <path d="M1 5.500h2.500L7 2v12l-3.500-3.500H1z" fill="#dfe5ec" />
          <path d="M9.500 5.500c1.500 1.500 1.500 3.500 0 5M12 3.500c2.500 2.500 2.500 6.500 0 9" />
        </svg>
        <div className="w-[84px] pl-[4px] text-center text-[11px] leading-[17px]">
          13:27
          <br />
          30.11.2015
        </div>
        <button type="button" aria-label="Показать рабочий стол" className="h-[38px] w-[14px] border border-[#4c5c72] bg-linear-to-b from-[#8a99ac] to-[#5d6d82]" />
      </div>
    </div>
  );
}

export default function App() {
  return (
    <div className="flex h-screen flex-col overflow-hidden font-['Noto_Sans',sans-serif] text-[11px]">
      <Header />
      <Ribbon />
      <div className="flex min-h-0 flex-1 bg-[linear-gradient(180deg,#bfc3ca_0,#e9ebef_28px)]">
        <NavigationPane />
        <div className="flex min-w-0 flex-1 flex-col">
          <DocumentTabs />
          <div className="h-[3px] shrink-0 border-b border-[#868d95] bg-[#fcfcfd]" />
          <main className="flex min-h-0 flex-1 bg-linear-to-b from-[#cdd1d5] via-[#c3c6ca] to-[#b7babe]">
            <div className="w-[24px] shrink-0 bg-[#cbced3]">
              <div className="flex h-[23px] w-[23px] items-center justify-center border border-[#868d95]">
                <div className="flex h-[15px] w-[14px] items-center justify-center border border-[#868d95] bg-white">
                  <svg className="h-[6px] w-[6px]" viewBox="0 0 6 6"><path d="M1 0v5h5" fill="none" stroke="#333" strokeWidth="2" /></svg>
                </div>
              </div>
              <VerticalRuler />
            </div>
            <div className="flex min-w-0 flex-1 flex-col items-center">
              <div className="pt-[5px]">
                <HorizontalRuler />
                <div className="pt-[9px]">
                  <DocumentPage />
                </div>
              </div>
            </div>
            <Scrollbar />
          </main>
        </div>
      </div>
      <StatusBar />
      <Taskbar />
    </div>
  );
}
